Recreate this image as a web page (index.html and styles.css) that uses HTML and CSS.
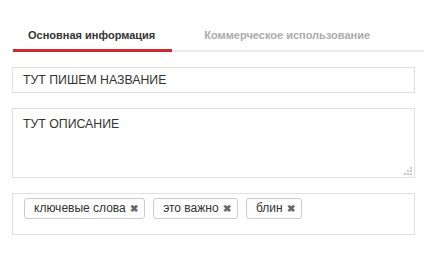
FILE: index.html
```html
<!DOCTYPE html>
<html lang="ru">
  <head>
    <meta charset="UTF-8" />
    <title>Форма</title>
    <link rel="stylesheet" href="styles.css">
  </head>
  <body>
    <div class="wrap">
      <nav class="tabs">
        <ul>
          <li class="on"><a href="">Основная информация</a></li>
          <li><a href="">Коммерческое использование</a></li>
        </ul>
      </nav>
      <div class="field title">ТУТ ПИШЕМ НАЗВАНИЕ</div>
      <div class="field descr">
        ТУТ ОПИСАНИЕ
        <svg class="grip" width="9" height="9" viewBox="0 0 9 9">
          <rect x="7" y="1" width="2" height="2" fill="#c8c8c8"/>
          <rect x="4" y="4" width="2" height="2" fill="#c8c8c8"/>
          <rect x="7" y="4" width="2" height="2" fill="#c8c8c8"/>
          <rect x="1" y="7" width="2" height="2" fill="#c8c8c8"/>
          <rect x="4" y="7" width="2" height="2" fill="#c8c8c8"/>
          <rect x="7" y="7" width="2" height="2" fill="#c8c8c8"/>
        </svg>
      </div>
      <div class="field tags">
        <span class="tag">ключевые слова <b>✖</b></span>
        <span class="tag">это важно <b>✖</b></span>
        <span class="tag">блин <b>✖</b></span>
      </div>
    </div>
  </body>
</html>
```

FILE: styles.css
```css
* {
  margin: 0;
  padding: 0;
  box-sizing: border-box;
}
body {
  font-family: "Liberation Sans", Arial, sans-serif;
  font-size: 12px;
  color: #333;
  background: #fff;
}
ul,
li {
  list-style: none;
}

.wrap {
  padding-left: 12px;
}

/* вкладки */
.tabs ul {
  display: flex;
  padding-top: 28px;
  padding-left: 1px;
  border-bottom: 2px solid #e8e8e8;
}
.tabs li a {
  display: block;
  padding: 0 17px 7px 15px;
  margin-bottom: -2px;
  font-size: 11px;
  line-height: 14px;
  font-weight: bold;
  color: #aaa;
  text-decoration: none;
  border-bottom: 3px solid transparent;
}
.tabs li + li a {
  padding-left: 32px;
}
.tabs li.on a {
  color: #333;
  border-bottom-color: #cf2a2f;
}

/* поля */
.field {
  margin: 15px 9px 0 0;
  border: 1px solid #e0e0e0;
  padding: 0 10px;
}
.title {
  height: 26px;
  line-height: 24px;
  font-size: 12.3px;
}
.descr {
  position: relative;
  height: 70px;
  padding-top: 8px;
  font-size: 12.3px;
}
.grip {
  position: absolute;
  right: 2px;
  bottom: 2px;
}
.tags {
  display: flex;
  gap: 8px;
  height: 42px;
  padding: 4px 11px;
  align-items: flex-start;
}
.tag {
  display: inline-block;
  height: 21px;
  line-height: 19px;
  padding: 0 6px 0 9px;
  border: 1px solid #ccc;
  border-radius: 3px;
  background: #fdfdfd;
}
.tag b {
  font-size: 10px;
  color: #666;
  margin-left: 1px;
}
```
